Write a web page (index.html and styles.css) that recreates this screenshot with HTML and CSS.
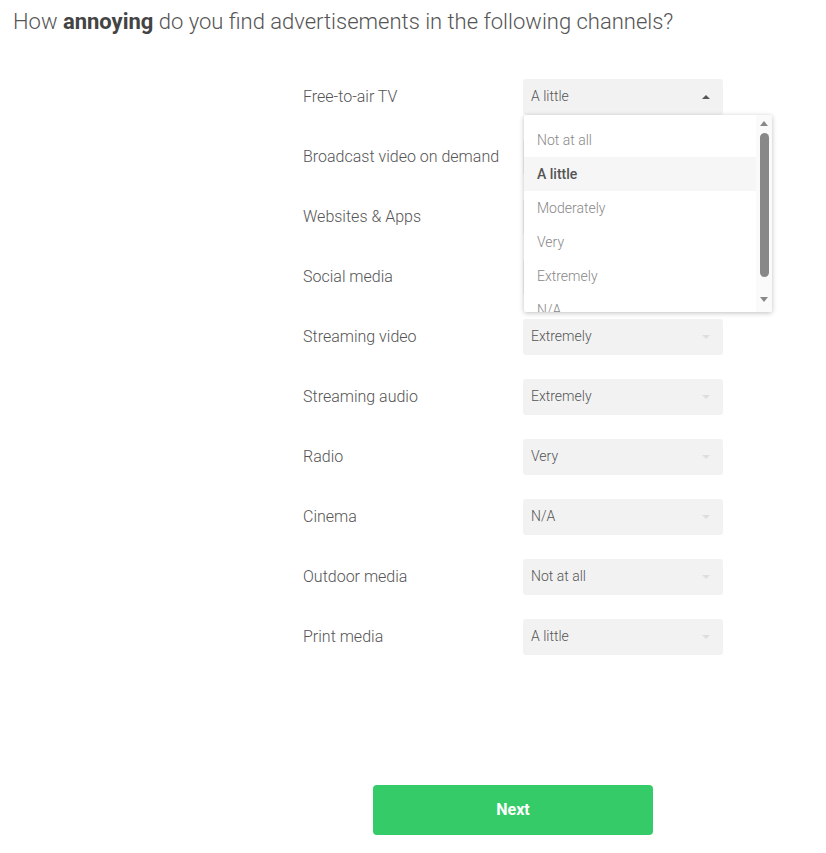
FILE: index.html
```html
<!DOCTYPE html>
<html>
<head>
<meta charset="utf-8">
<link rel="stylesheet" href="styles.css">
</head>
<body>
<h1 class="title">How <b>annoying</b> do you find advertisements in the following channels?</h1>
<div class="form">
  <div class="row">
    <div class="label">Free-to-air TV</div>
    <div class="select open"><span>A little</span><i class="caret up"></i>
      <div class="menu">
        <div class="list">
          <div class="opt">Not at all</div>
          <div class="opt sel">A little</div>
          <div class="opt">Moderately</div>
          <div class="opt">Very</div>
          <div class="opt">Extremely</div>
          <div class="opt">N/A</div>
        </div>
        <div class="sbar"><i class="sarrow sup"></i><div class="thumb"></div><i class="sarrow sdown"></i></div>
      </div>
    </div>
  </div>
  <div class="row"><div class="label">Broadcast video on demand</div><div class="select"><span>Moderately</span><i class="caret"></i></div></div>
  <div class="row"><div class="label">Websites &amp; Apps</div><div class="select"><span>Very</span><i class="caret"></i></div></div>
  <div class="row"><div class="label">Social media</div><div class="select"><span>Very</span><i class="caret"></i></div></div>
  <div class="row"><div class="label">Streaming video</div><div class="select"><span>Extremely</span><i class="caret"></i></div></div>
  <div class="row"><div class="label">Streaming audio</div><div class="select"><span>Extremely</span><i class="caret"></i></div></div>
  <div class="row"><div class="label">Radio</div><div class="select"><span>Very</span><i class="caret"></i></div></div>
  <div class="row"><div class="label">Cinema</div><div class="select"><span>N/A</span><i class="caret"></i></div></div>
  <div class="row"><div class="label">Outdoor media</div><div class="select"><span>Not at all</span><i class="caret"></i></div></div>
  <div class="row"><div class="label">Print media</div><div class="select"><span>A little</span><i class="caret"></i></div></div>
</div>
<div class="actions"><button class="next">Next</button></div>
</body>
</html>
```
FILE: styles.css
```css
html, body { margin: 0; padding: 0; background: #fff; }
body { font-family: Roboto, "Noto Sans", sans-serif; color: #555; width: 826px; height: 853px; overflow: hidden; }
.title { margin: 0; padding: 8px 0 0 13px; font-size: 22px; line-height: 28px; font-weight: 300; color: #555; }
.title b { font-weight: 700; color: #444; }
.form { margin: 43px 0 0 303px; display: flex; flex-direction: column; gap: 24px; width: 420px; }
.row { display: flex; align-items: center; height: 36px; }
.label { width: 220px; font-size: 16px; line-height: 18px; font-weight: 300; color: #555; }
.select { position: relative; width: 200px; height: 36px; background: #f2f2f2; border-radius: 3px; display: flex; align-items: center; padding-left: 8px; box-sizing: border-box; font-size: 14px; font-weight: 300; color: #555; }
.select span { flex: 1; line-height: 16px; padding-bottom: 2px; }
.caret { width: 0; height: 0; border-left: 4px solid transparent; border-right: 4px solid transparent; border-top: 4px solid #dedede; margin-right: 13px; }
.caret.up { border-top: 0; border-bottom: 4px solid #555; }
.menu { position: absolute; top: 36px; left: 1px; width: 248px; height: 197px; background: #fff; box-shadow: 0 1px 5px rgba(0,0,0,0.25); border-radius: 2px; display: flex; overflow: hidden; z-index: 5; }
.list { flex: 1; padding-top: 8px; }
.opt { height: 34px; line-height: 34px; padding-left: 13px; color: #888; font-size: 14px; font-weight: 300; }
.opt.sel { background: #f6f6f6; color: #555; font-weight: 500; }
.sbar { width: 16px; background: #fafafa; display: flex; flex-direction: column; align-items: center; padding-top: 6px; box-sizing: border-box; }
.sarrow { width: 0; height: 0; border-left: 4px solid transparent; border-right: 4px solid transparent; }
.sup { border-bottom: 5px solid #888; }
.sdown { border-top: 5px solid #888; margin-top: 20px; }
.thumb { width: 9px; height: 144px; background: #888; border-radius: 5px; margin-top: 7px; }
.actions { margin: 130px 0 0 373px; }
.next { width: 280px; height: 50px; background: #35cb69; color: #fff; border: 0; border-radius: 4px; font-family: Roboto, sans-serif; font-size: 16px; font-weight: 700; padding: 0 0 2px; }
```
